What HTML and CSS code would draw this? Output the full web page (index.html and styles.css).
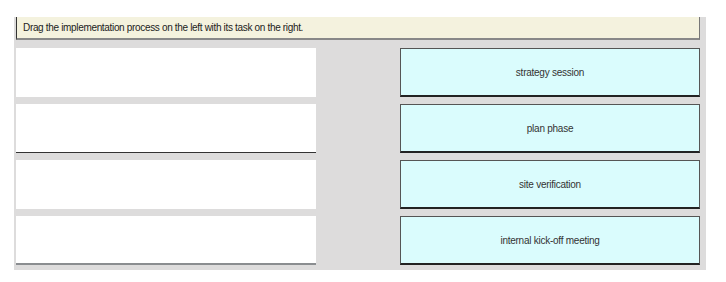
FILE: index.html
```html
<!DOCTYPE html>
<html lang="en">
<head>
    <title>Drag and drop</title>
    <link rel="stylesheet" href="styles.css">
</head>
<body>
    <!-- question panel -->
    <div class="panel">
        <div class="question">Drag the implementation process on the left with its task on the right.</div>
        <div class="rows">
            <div class="slot"></div>
            <div class="task">strategy session</div>
            <div class="slot line-dark"></div>
            <div class="task">plan phase</div>
            <div class="slot"></div>
            <div class="task">site verification</div>
            <div class="slot line-grey"></div>
            <div class="task">internal kick-off meeting</div>
        </div>
    </div>
</body>
</html>
```
FILE: styles.css
```css
body {
    font-family: "Liberation Sans", Arial, sans-serif;
    background-color: #fff;
    margin: 0;
    padding: 17px 0 0 14px;
}

.panel {
    width: 692px;
    height: 253px;
    box-sizing: border-box;
    background-color: #dddcdc;
    padding: 0 6px 0 2px;
}

.question {
    height: 23px;
    box-sizing: border-box;
    background-color: #f4f2de;
    border-left: 1px solid #333;
    border-right: 1px solid #777;
    border-bottom: 2px solid #888;
    padding: 5px 0 0 6px;
    font-size: 10px;
    letter-spacing: -0.33px;
    color: #222;
}

.rows {
    display: grid;
    grid-template-columns: 300px 300px;
    grid-auto-rows: 49px;
    column-gap: 84px;
    row-gap: 7px;
    margin-top: 8px;
}

.slot {
    background-color: #fff;
}

.slot.line-dark {
    border-bottom: 1px solid #333;
}

.slot.line-grey {
    border-bottom: 2px solid #8a8d90;
}

.task {
    background-color: #dafcfd;
    border: 1px solid #555;
    border-bottom: 2px solid #222;
    display: flex;
    align-items: center;
    justify-content: center;
    font-size: 10px;
    letter-spacing: -0.25px;
    color: #333;
}
```
